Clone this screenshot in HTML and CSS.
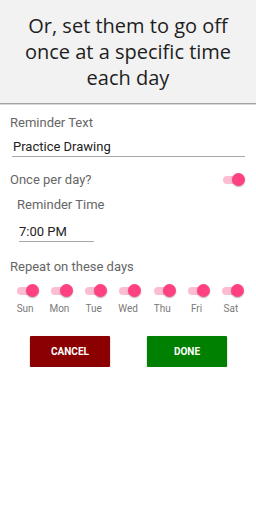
FILE: index.html
```html
<!DOCTYPE html>
<html lang="en">

<head>
    <meta charset="UTF-8">
    <meta name="viewport" content="width=device-width, initial-scale=1.0">
    <title>Reminder</title>
    <link rel="stylesheet" href="styles.css">
</head>

<body>
    <!-- title -->
    <div class="header">
        <div class="header-text">Or, set them to go off once at a specific time each day</div>
    </div>

    <div class="form">
        <div class="label">Reminder Text</div>
        <div class="input text-input">Practice Drawing</div>

        <div class="row once-row">
            <div class="label">Once per day?</div>
            <div class="toggle"><span class="track"></span><span class="thumb"></span></div>
        </div>

        <div class="label time-label">Reminder Time</div>
        <div class="input time-input">7:00 PM</div>

        <div class="label repeat-label">Repeat on these days</div>
        <div class="days">
            <div class="day"><div class="toggle"><span class="track"></span><span class="thumb"></span></div><span class="day-name">Sun</span></div>
            <div class="day"><div class="toggle"><span class="track"></span><span class="thumb"></span></div><span class="day-name">Mon</span></div>
            <div class="day"><div class="toggle"><span class="track"></span><span class="thumb"></span></div><span class="day-name">Tue</span></div>
            <div class="day"><div class="toggle"><span class="track"></span><span class="thumb"></span></div><span class="day-name">Wed</span></div>
            <div class="day"><div class="toggle"><span class="track"></span><span class="thumb"></span></div><span class="day-name">Thu</span></div>
            <div class="day"><div class="toggle"><span class="track"></span><span class="thumb"></span></div><span class="day-name">Fri</span></div>
            <div class="day"><div class="toggle"><span class="track"></span><span class="thumb"></span></div><span class="day-name">Sat</span></div>
        </div>

        <div class="buttons">
            <div class="btn cancel">Cancel</div>
            <div class="btn done">Done</div>
        </div>
    </div>
</body>

</html>
```

FILE: styles.css
```css
body {
    margin: 0;
    font-family: Roboto, "Liberation Sans", sans-serif;
    background: #ffffff;
}

.header {
    height: 103px;
    background-color: #f2f2f2;
    border-bottom: 1px solid #a3a3a3;
    display: flex;
    align-items: center;
    justify-content: center;
    box-shadow: 0 1px 0 #d8d8d8;
}

.header-text {
    font-family: "Open Sans", sans-serif;
    font-size: 20px;
    line-height: 26px;
    color: #1e1e1e;
    text-align: center;
    padding: 0 16px;
}

.form {
    padding: 11px 11px 0 10px;
}

.label {
    font-size: 13px;
    line-height: 16px;
    color: #666666;
}

.input {
    font-size: 13px;
    line-height: 16px;
    color: #222222;
    border-bottom: 1px solid #a8a8a8;
    padding-bottom: 1px;
}

.text-input {
    margin: 8px 0 0 2px;
    padding-left: 1px;
}

.row {
    display: flex;
    align-items: center;
    justify-content: space-between;
}

.once-row {
    margin-top: 15px;
}

.time-label {
    margin: 9px 0 0 7px;
}

.time-input {
    width: 75px;
    margin: 11px 0 0 9px;
}

.repeat-label {
    margin-top: 17px;
}

/* switches */
.toggle {
    position: relative;
    width: 22px;
    height: 14px;
}

.toggle .track {
    position: absolute;
    left: 0;
    top: 3px;
    width: 18px;
    height: 8px;
    border-radius: 4px;
    background: #fcbdd3;
}

.toggle .thumb {
    position: absolute;
    right: 0;
    top: 0;
    width: 13px;
    height: 13px;
    border-radius: 50%;
    background: #ff4081;
    box-shadow: 0 1px 1.5px rgba(0, 0, 0, 0.3);
}

.days {
    display: grid;
    grid-template-columns: repeat(7, 1fr);
    margin: 9px 0 0 -2px;
    width: 240px;
}

.day {
    display: flex;
    flex-direction: column;
    align-items: center;
}

.day .toggle {
    margin-left: 5px;
}

.day-name {
    margin-top: 5px;
    font-size: 10px;
    line-height: 12px;
    color: #7a7a7a;
}

.buttons {
    display: flex;
    gap: 37px;
    margin: 21px 0 0 20px;
}

.btn {
    width: 80px;
    height: 31px;
    display: flex;
    align-items: center;
    justify-content: center;
    color: #ffffff;
    font-size: 10px;
    font-weight: bold;
    text-transform: uppercase;
    box-shadow: 0 1px 2px rgba(0, 0, 0, 0.35);
    border-radius: 1px;
}

.cancel {
    background: #8b0000;
}

.done {
    background: #008000;
}
```
